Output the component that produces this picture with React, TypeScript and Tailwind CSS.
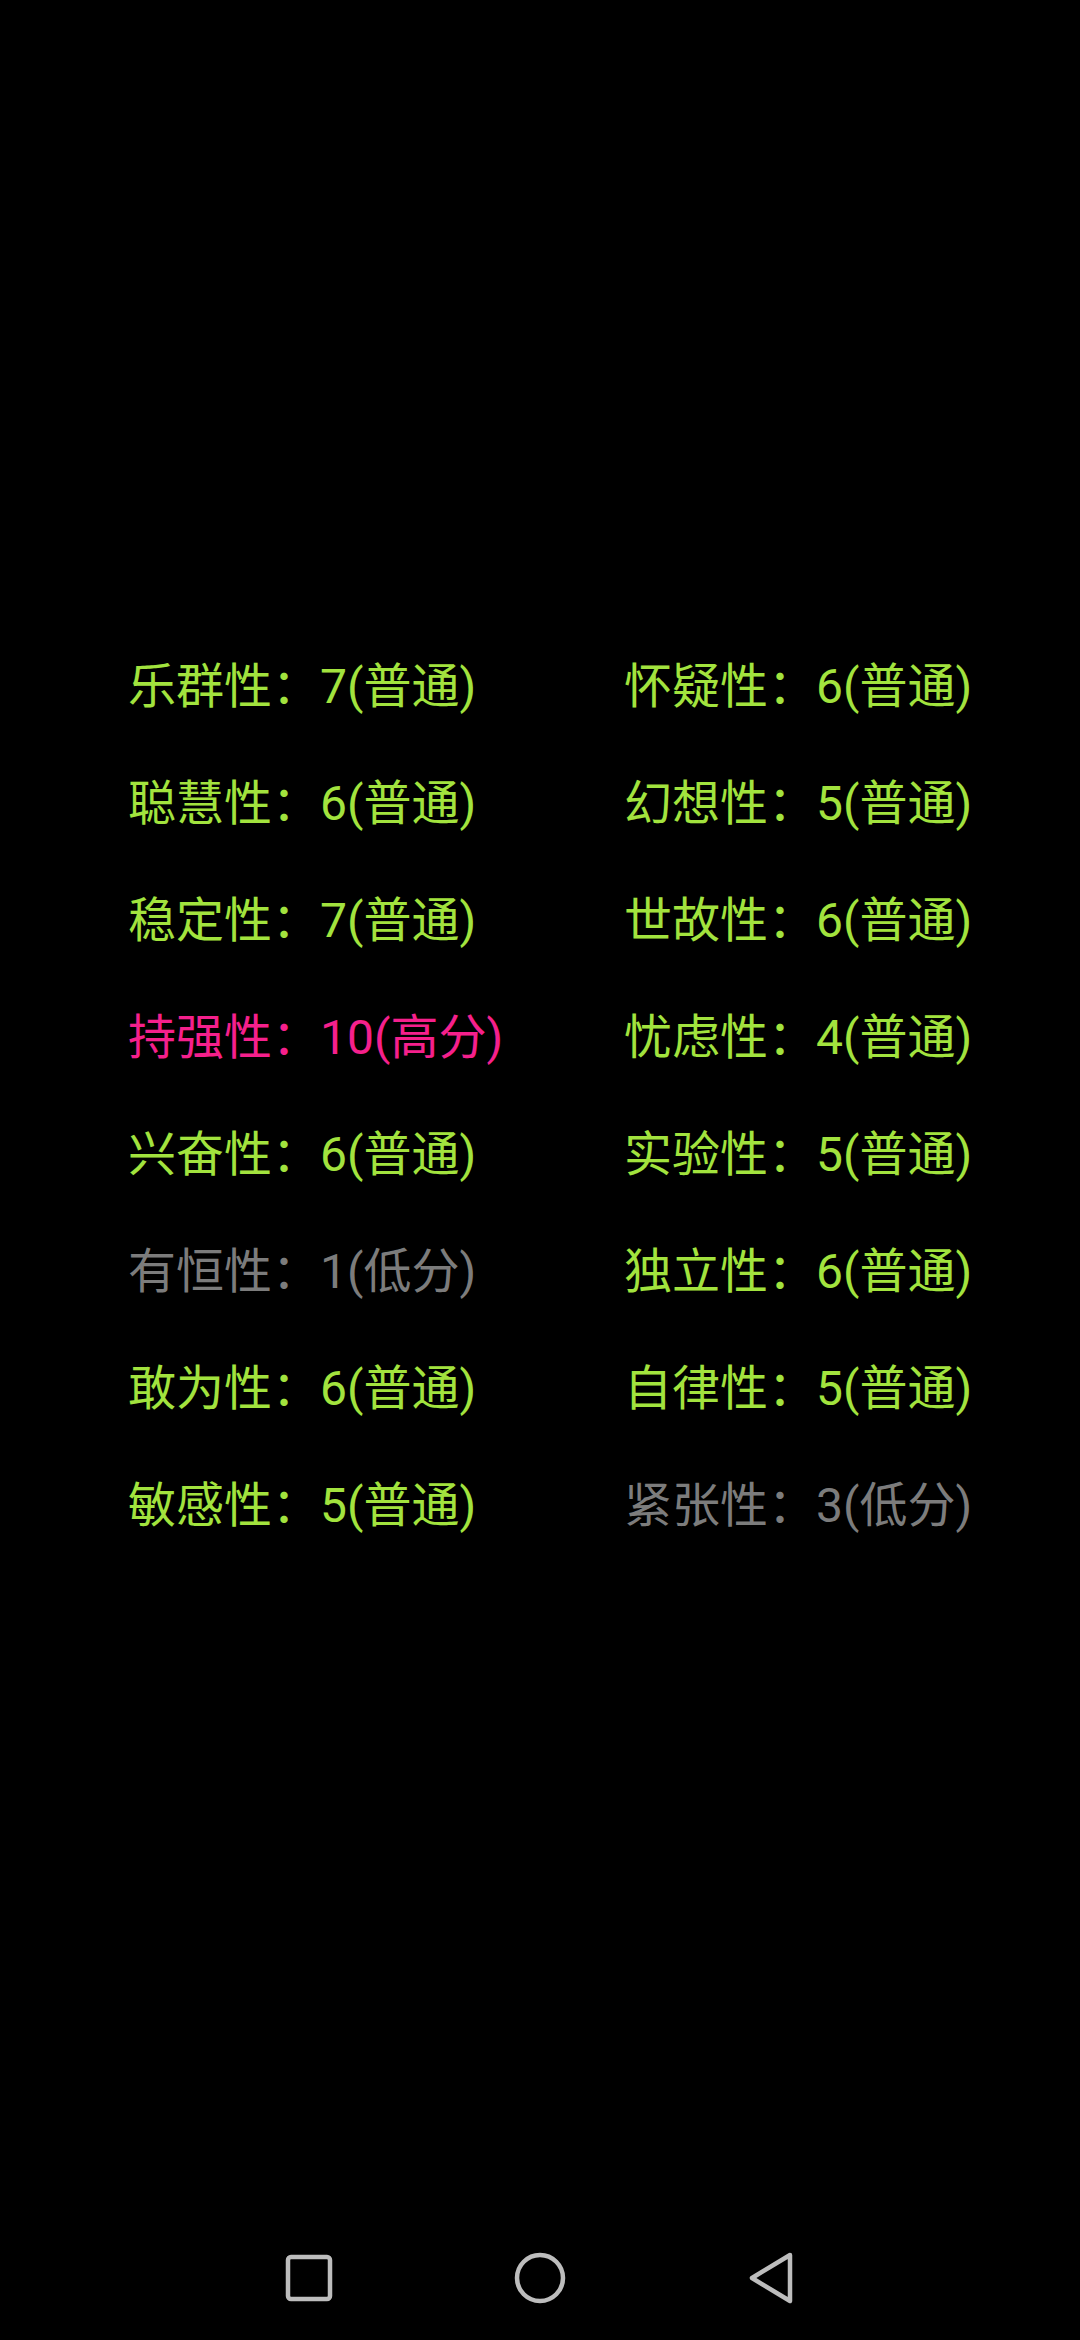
const traits: { left: [string, string, string]; right: [string, string, string] }[] = [
  { left: ["乐群性", "7(普通)", "mid"], right: ["怀疑性", "6(普通)", "mid"] },
  { left: ["聪慧性", "6(普通)", "mid"], right: ["幻想性", "5(普通)", "mid"] },
  { left: ["稳定性", "7(普通)", "mid"], right: ["世故性", "6(普通)", "mid"] },
  { left: ["持强性", "10(高分)", "high"], right: ["忧虑性", "4(普通)", "mid"] },
  { left: ["兴奋性", "6(普通)", "mid"], right: ["实验性", "5(普通)", "mid"] },
  { left: ["有恒性", "1(低分)", "low"], right: ["独立性", "6(普通)", "mid"] },
  { left: ["敢为性", "6(普通)", "mid"], right: ["自律性", "5(普通)", "mid"] },
  { left: ["敏感性", "5(普通)", "mid"], right: ["紧张性", "3(低分)", "low"] },
];

const levelColor: Record<string, string> = {
  mid: "text-[#a2e33e]",
  high: "text-[#f5208c]",
  low: "text-[#7c7c7c]",
};

function Trait({ item }: { item: [string, string, string] }) {
  const [name, score, level] = item;
  return (
    <div className={`h-[117px] flex items-center whitespace-nowrap ${levelColor[level]}`}>
      {name}：{score}
    </div>
  );
}

export default function App() {
  return (
    <div
      className="h-[2340px] w-[1080px] bg-black flex flex-col"
      style={{ fontFamily: 'Roboto, "Noto Sans CJK SC", sans-serif' }}
    >
      {/* Trait grid */}
      <div className="flex-1 pt-[628px] pl-[128px]">
        <div className="grid grid-cols-[496px_1fr] text-[48px] leading-none">
          {traits.map((row, i) => (
            <div key={i} className="contents">
              <Trait item={row.left} />
              <Trait item={row.right} />
            </div>
          ))}
        </div>
      </div>

      {/* Navigation bar */}
      <div className="h-[124px] flex items-center justify-center gap-[171px]">
        <div className="w-[60px] flex justify-center">
          <svg width="48" height="48" viewBox="0 0 48 48">
            <rect x="3" y="3" width="42" height="42" rx="3" fill="none" stroke="#bdbdbd" strokeWidth="4.5" />
          </svg>
        </div>
        <div className="w-[60px] flex justify-center">
          <svg width="52" height="52" viewBox="0 0 52 52">
            <circle cx="26" cy="26" r="23" fill="none" stroke="#bdbdbd" strokeWidth="4.5" />
          </svg>
        </div>
        <div className="w-[60px] flex justify-center">
          <svg width="52" height="54" viewBox="0 0 52 54">
            <path d="M45 4 L7 27 L45 50 Z" fill="none" stroke="#bdbdbd" strokeWidth="4.5" strokeLinejoin="round" />
          </svg>
        </div>
      </div>
    </div>
  );
}
